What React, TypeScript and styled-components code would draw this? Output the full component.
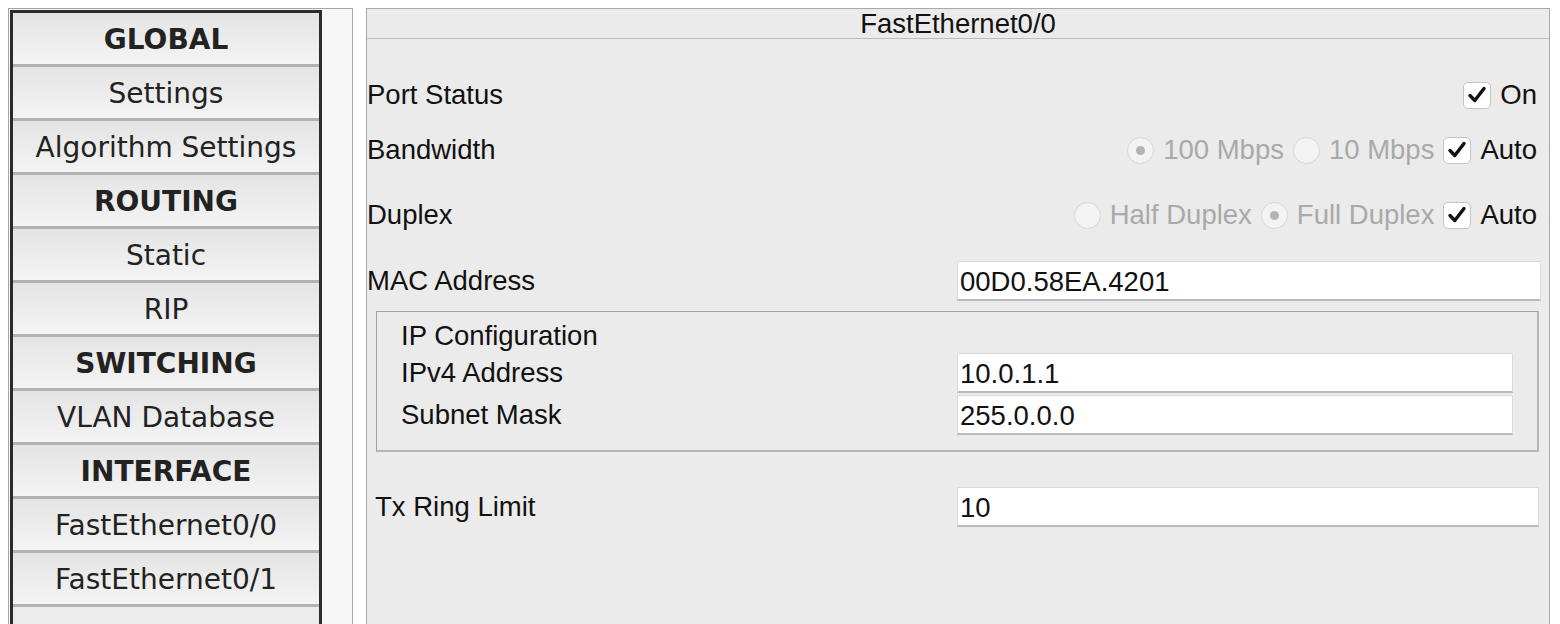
import { FC } from 'react';
import styled, { createGlobalStyle } from 'styled-components';

const GlobalStyle = createGlobalStyle`
    html, body {
        margin: 0;
        padding: 0;
        background: #ffffff;
        overflow: hidden;
    }
`;

const Page = styled.div`
    display: flex;
    align-items: flex-start;
    gap: 13px;
    padding: 8px 0 0 8px;
    height: 100vh;
    box-sizing: border-box;
    overflow: hidden;
`;

/* left column */
const Sidebar = styled.div`
    width: 345px;
    height: 720px;
    box-sizing: border-box;
    flex-shrink: 0;
    border: 1px solid #a6a6a6;
    border-bottom: none;
    background: #f7f7f7;
    padding: 1px 28px 0 1px;
`;

const NavList = styled.div`
    width: 312px;
    height: 100%;
    box-sizing: border-box;
    border: 3px solid #2b2b2b;
    border-bottom: none;
    background: #ececec;
    display: flex;
    flex-direction: column;
`;

const NavItem = styled.div<{ $heading?: boolean }>`
    height: 54px;
    flex-shrink: 0;
    display: flex;
    align-items: center;
    justify-content: center;
    border-bottom: 3px solid #b2b2b2;
    background: linear-gradient(to bottom, #e4e4e4, #f4f4f4);
    font-family: "DejaVu Sans", Verdana, sans-serif;
    font-size: 28px;
    font-weight: ${p => (p.$heading ? 700 : 400)};
    color: #222222;
    padding-top: 2px;
    box-sizing: border-box;
`;

/* right column */
const Panel = styled.div`
    width: 1184px;
    height: 720px;
    flex-shrink: 0;
    box-sizing: border-box;
    border: 1px solid #a8a8a8;
    border-bottom: none;
    background: #ebebeb;
    font-family: "Liberation Sans", Arial, Helvetica, sans-serif;
    font-size: 27.5px;
    color: #111111;
`;

const PanelTitle = styled.div`
    height: 29px;
    line-height: 29px;
    text-align: center;
    border-bottom: 1px solid #bcbcbc;
`;

const Row = styled.div<{ $top: number; $height?: number }>`
    display: flex;
    align-items: center;
    justify-content: space-between;
    margin-top: ${p => p.$top}px;
    height: ${p => p.$height ?? 40}px;
    padding-right: 12px;
`;

const Label = styled.span<{ $indent?: number }>`
    padding-left: ${p => p.$indent ?? 0}px;
    white-space: nowrap;
`;

const Controls = styled.div`
    display: flex;
    align-items: center;
    gap: 9px;
`;

const Option = styled.label<{ $disabled?: boolean }>`
    display: flex;
    align-items: center;
    gap: 9px;
    color: ${p => (p.$disabled ? '#a9a9a9' : '#111111')};
    white-space: nowrap;
`;

const Radio = styled.span<{ $checked?: boolean }>`
    width: 27px;
    height: 27px;
    box-sizing: border-box;
    border-radius: 50%;
    border: 1px solid #d6d6d6;
    background: #f3f3f3;
    display: flex;
    align-items: center;
    justify-content: center;
    &::after {
        content: '';
        width: 9px;
        height: 9px;
        border-radius: 50%;
        background: ${p => (p.$checked ? '#b4b4b4' : 'transparent')};
    }
`;

const CheckBox = styled.span`
    width: 28px;
    height: 27px;
    box-sizing: border-box;
    border-radius: 5px;
    border: 1px solid #c4c4c4;
    background: #ffffff;
    display: flex;
    align-items: center;
    justify-content: center;
`;

const FieldRow = styled.div<{ $top: number; $col: number; $right: number; $indent?: number }>`
    display: grid;
    grid-template-columns: ${p => p.$col}px 1fr;
    align-items: center;
    margin-top: ${p => p.$top}px;
    height: 42px;
    padding-left: ${p => p.$indent ?? 0}px;
    padding-right: ${p => p.$right}px;
`;

const TextBox = styled.div`
    height: 40px;
    box-sizing: border-box;
    background: #ffffff;
    border: 1px solid #dadada;
    border-bottom: 2px solid #b9b9b9;
    padding: 2px 0 0 2px;
    display: flex;
    align-items: center;
    white-space: nowrap;
`;

const GroupBox = styled.div`
    margin: 9px 10px 0 9px;
    height: 141px;
    box-sizing: border-box;
    border: 1px solid #a2a2a2;
    border-right: 2px solid #b5b5b5;
    border-bottom: 2px solid #b5b5b5;
    padding-top: 8px;
`;

const GroupTitle = styled.div`
    height: 32px;
    line-height: 32px;
    padding-left: 24px;
`;

const GroupRow = styled.div<{ $top: number }>`
    display: grid;
    grid-template-columns: 580px 1fr;
    align-items: center;
    margin-top: ${p => p.$top}px;
    height: 40px;
    padding-right: 24px;
    & > span {
        padding-left: 24px;
    }
`;

const Check: FC = () => (
    <CheckBox>
        <svg width="22" height="22" viewBox="0 0 22 22">
            <path d="M4 11.5 L8.8 16.5 L18 4.5" fill="none" stroke="#111" strokeWidth="3.4" strokeLinecap="round" strokeLinejoin="round" />
        </svg>
    </CheckBox>
);

const navItems: { text: string; heading?: boolean }[] = [
    { text: 'GLOBAL', heading: true },
    { text: 'Settings' },
    { text: 'Algorithm Settings' },
    { text: 'ROUTING', heading: true },
    { text: 'Static' },
    { text: 'RIP' },
    { text: 'SWITCHING', heading: true },
    { text: 'VLAN Database' },
    { text: 'INTERFACE', heading: true },
    { text: 'FastEthernet0/0' },
    { text: 'FastEthernet0/1' },
];

const App: FC = () => {
    return (
        <>
            <GlobalStyle />
            <Page>
                <Sidebar>
                    <NavList>
                        {navItems.map(item => (
                            <NavItem key={item.text} $heading={item.heading}>{item.text}</NavItem>
                        ))}
                    </NavList>
                </Sidebar>
                <Panel>
                    <PanelTitle>FastEthernet0/0</PanelTitle>
                    <Row $top={36}>
                        <Label>Port Status</Label>
                        <Controls>
                            <Option><Check />On</Option>
                        </Controls>
                    </Row>
                    <Row $top={15}>
                        <Label>Bandwidth</Label>
                        <Controls>
                            <Option $disabled><Radio $checked />100 Mbps</Option>
                            <Option $disabled><Radio />10 Mbps</Option>
                            <Option><Check />Auto</Option>
                        </Controls>
                    </Row>
                    <Row $top={25}>
                        <Label>Duplex</Label>
                        <Controls>
                            <Option $disabled><Radio />Half Duplex</Option>
                            <Option $disabled><Radio $checked />Full Duplex</Option>
                            <Option><Check />Auto</Option>
                        </Controls>
                    </Row>
                    <FieldRow $top={25} $col={590} $right={8}>
                        <Label>MAC Address</Label>
                        <TextBox>00D0.58EA.4201</TextBox>
                    </FieldRow>
                    <GroupBox>
                        <GroupTitle>IP Configuration</GroupTitle>
                        <GroupRow $top={1}>
                            <span>IPv4 Address</span>
                            <TextBox>10.0.1.1</TextBox>
                        </GroupRow>
                        <GroupRow $top={2}>
                            <span>Subnet Mask</span>
                            <TextBox>255.0.0.0</TextBox>
                        </GroupRow>
                    </GroupBox>
                    <FieldRow $top={34} $col={582} $right={10} $indent={8}>
                        <Label>Tx Ring Limit</Label>
                        <TextBox>10</TextBox>
                    </FieldRow>
                </Panel>
            </Page>
        </>
    );
};

export default App;
